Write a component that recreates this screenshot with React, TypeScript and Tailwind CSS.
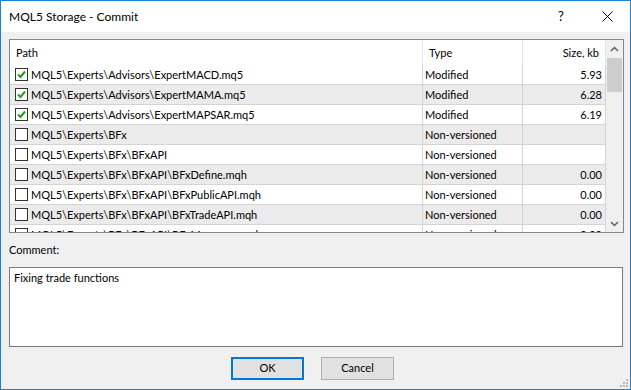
import React from "react";

const FONT = { fontFamily: 'Lato, "Noto Sans", Arial, sans-serif' };

type Row = { path: string; type: string; size: string; checked: boolean };

const rows: Row[] = [
  { path: "MQL5\\Experts\\Advisors\\ExpertMACD.mq5", type: "Modified", size: "5.93", checked: true },
  { path: "MQL5\\Experts\\Advisors\\ExpertMAMA.mq5", type: "Modified", size: "6.28", checked: true },
  { path: "MQL5\\Experts\\Advisors\\ExpertMAPSAR.mq5", type: "Modified", size: "6.19", checked: true },
  { path: "MQL5\\Experts\\BFx", type: "Non-versioned", size: "", checked: false },
  { path: "MQL5\\Experts\\BFx\\BFxAPI", type: "Non-versioned", size: "", checked: false },
  { path: "MQL5\\Experts\\BFx\\BFxAPI\\BFxDefine.mqh", type: "Non-versioned", size: "0.00", checked: false },
  { path: "MQL5\\Experts\\BFx\\BFxAPI\\BFxPublicAPI.mqh", type: "Non-versioned", size: "0.00", checked: false },
  { path: "MQL5\\Experts\\BFx\\BFxAPI\\BFxTradeAPI.mqh", type: "Non-versioned", size: "0.00", checked: false },
  { path: "MQL5\\Experts\\BFx\\BFxAPI\\BFxMessages.mqh", type: "Non-versioned", size: "0.00", checked: false },
];

function CheckBox({ checked }: { checked: boolean }) {
  return (
    <div className="w-[13px] h-[13px] border border-[#333333] bg-white shrink-0 relative">
      {checked && (
        <svg width="11" height="11" viewBox="0 0 11 11" className="absolute left-0 top-0">
          <path d="M2 5.5 L4.5 8 L9 2.5" stroke="#1fa01f" strokeWidth="2" fill="none" />
        </svg>
      )}
    </div>
  );
}

export default function App() {
  return (
    <div
      className="w-[631px] h-[390px] border border-[#1883d7] bg-[#f0f0f0] flex flex-col relative text-[11px] text-black overflow-hidden"
      style={FONT}
    >
      {/* Title bar */}
      <div className="h-[31px] bg-white flex items-center shrink-0">
        <div className="pl-[8px] flex-1 text-[12px]">MQL5 Storage - Commit</div>
        <div className="w-[46px] text-center text-[13px] ml-[2px]">?</div>
        <div className="w-[46px] h-[31px] flex items-center justify-center">
          <svg width="11" height="11" viewBox="0 0 11 11">
            <path d="M0.5 0.5 L10.5 10.5 M10.5 0.5 L0.5 10.5" stroke="#000" strokeWidth="1" />
          </svg>
        </div>
      </div>

      {/* List */}
      <div className="ml-[8px] mt-[7px] w-[615px] h-[194px] border border-[#828790] bg-white flex overflow-hidden shrink-0">
        <div className="flex-1 flex flex-col overflow-hidden">
          {/* header */}
          <div className="h-[25px] flex shrink-0 bg-white">
            <div className="w-[413px] border-r border-[#e5e5e5] pl-[6px] pt-[1px] flex items-center">Path</div>
            <div className="w-[100px] border-r border-[#e5e5e5] pl-[6px] pt-[1px] flex items-center">Type</div>
            <div className="flex-1 border-r border-[#e5e5e5] pr-[6px] pt-[1px] flex items-center justify-end">Size, kb</div>
          </div>
          {rows.map((r, i) => (
            <div
              key={i}
              className={`h-[20px] flex shrink-0 border-b border-[#d4d4d4] ${i % 2 === 1 ? "bg-[#ebebeb]" : "bg-white"}`}
            >
              <div className="w-[413px] border-r border-[#d4d4d4] pl-[5px] flex items-center gap-[3px] whitespace-nowrap">
                <CheckBox checked={r.checked} />
                <span className="pt-[1px]">{r.path}</span>
              </div>
              <div className="w-[100px] border-r border-[#d4d4d4] pl-[2px] pt-[1px] flex items-center whitespace-nowrap">{r.type}</div>
              <div className="flex-1 border-r border-[#d4d4d4] pr-[3px] pt-[1px] flex items-center justify-end">{r.size}</div>
            </div>
          ))}
        </div>
        {/* Scrollbar */}
        <div className="w-[17px] bg-[#f0f0f0] flex flex-col items-center shrink-0">
          <div className="h-[17px] w-full flex items-center justify-center">
            <svg width="9" height="6" viewBox="0 0 9 6">
              <path d="M1 5 L4.5 1.5 L8 5" stroke="#606060" strokeWidth="1.5" fill="none" />
            </svg>
          </div>
          <div className="mt-[1px] w-[15px] h-[34px] bg-[#cdcdcd]" />
          <div className="flex-1" />
          <div className="h-[17px] w-full flex items-center justify-center">
            <svg width="9" height="6" viewBox="0 0 9 6">
              <path d="M1 1 L4.5 4.5 L8 1" stroke="#606060" strokeWidth="1.5" fill="none" />
            </svg>
          </div>
        </div>
      </div>

      {/* Comment label */}
      <div className="ml-[8px] mt-[8px] h-[17px] leading-[17px]">Comment:</div>

      {/* Comment box */}
      <div className="ml-[8px] mt-[9px] w-[614px] h-[80px] border border-[#7a7a7a] bg-white pl-[4px] pt-[2px] shrink-0">
        Fixing trade functions
      </div>

      {/* Buttons */}
      <div className="mt-[10px] flex justify-center gap-[17px] pr-[6px]">
        <div className="w-[73px] h-[23px] border-2 border-[#0078d7] bg-[#e1e1e1] flex items-center justify-center">OK</div>
        <div className="w-[73px] h-[23px] border border-[#adadad] bg-[#e1e1e1] flex items-center justify-center">Cancel</div>
      </div>

      {/* Resize grip */}
      <div className="absolute right-[2px] bottom-[2px] w-[8px] h-[8px]">
        <div className="absolute right-0 bottom-0 w-[2px] h-[2px] bg-[#b8b8b8]" />
        <div className="absolute right-[3px] bottom-0 w-[2px] h-[2px] bg-[#b8b8b8]" />
        <div className="absolute right-[6px] bottom-0 w-[2px] h-[2px] bg-[#b8b8b8]" />
        <div className="absolute right-0 bottom-[3px] w-[2px] h-[2px] bg-[#b8b8b8]" />
        <div className="absolute right-[3px] bottom-[3px] w-[2px] h-[2px] bg-[#b8b8b8]" />
        <div className="absolute right-0 bottom-[6px] w-[2px] h-[2px] bg-[#b8b8b8]" />
      </div>
    </div>
  );
}
